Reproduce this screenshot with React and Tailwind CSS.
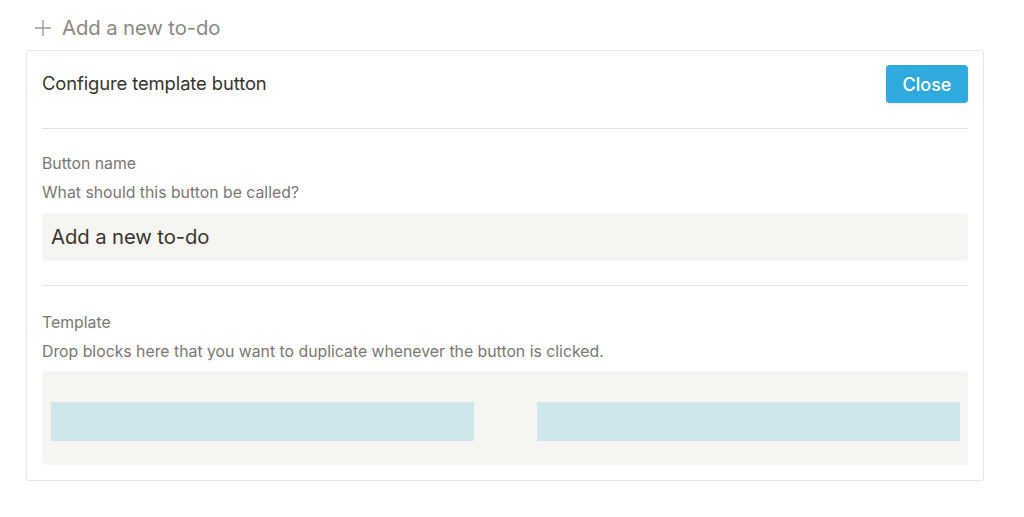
export default function App() {
  return (
    <div
      className="w-[1024px] h-[517px] bg-white overflow-hidden"
      style={{ fontFamily: "Inter, 'Liberation Sans', sans-serif" }}
    >
      <div className="h-[50px] flex items-center pl-[34px] pt-[6px] text-[#8a8986]">
        <svg width="18" height="18" viewBox="0 0 18 18" className="mr-[10px]">
          <path d="M9 1v16M1 9h16" stroke="#9b9a97" strokeWidth="1.4" fill="none" />
        </svg>
        <span className="text-[20.3px] leading-none tracking-[-0.1px]">Add a new to-do</span>
      </div>
      <div className="ml-[26px] w-[958px] h-[431px] border border-[#e6e6e4] rounded-[3px] px-[15px] flex flex-col">
        <div className="flex items-center justify-between pt-[14px] pb-[25px] border-b border-[#e3e3e1]">
          <div className="text-[18.4px] text-[#37352f] tracking-[-0.1px]">Configure template button</div>
          <button className="w-[82px] h-[38px] rounded-[4px] bg-[#2eaadc] text-white text-[18px] font-medium shadow-[0_1px_2px_rgba(15,15,15,0.1)]">
            Close
          </button>
        </div>
        <div className="pt-[25px] pb-[24px] border-b border-[#e3e3e1]">
          <div className="text-[15.8px] leading-[20px] text-[#787774]">Button name</div>
          <div className="text-[15.8px] leading-[20px] text-[#787774] mt-[9px]">What should this button be called?</div>
          <div className="mt-[10px] h-[48px] rounded-[4px] bg-[#f6f5f2] flex items-center px-[9px] text-[20.3px] text-[#37352f] tracking-[-0.1px]">
            Add a new to-do
          </div>
        </div>
        <div className="pt-[27px]">
          <div className="text-[15.8px] leading-[20px] text-[#787774]">Template</div>
          <div className="text-[15.8px] leading-[20px] text-[#787774] mt-[9px]">
            Drop blocks here that you want to duplicate whenever the button is clicked.
          </div>
          <div className="mt-[9px] h-[94px] rounded-[4px] bg-[#f6f5f2] pt-[31px] pl-[9px] pr-[8px] flex gap-[63px]">
            <div className="w-[423px] h-[39px] bg-[#cfe6ed]" />
            <div className="w-[423px] h-[39px] bg-[#cfe6ed]" />
          </div>
        </div>
      </div>
    </div>
  );
}
